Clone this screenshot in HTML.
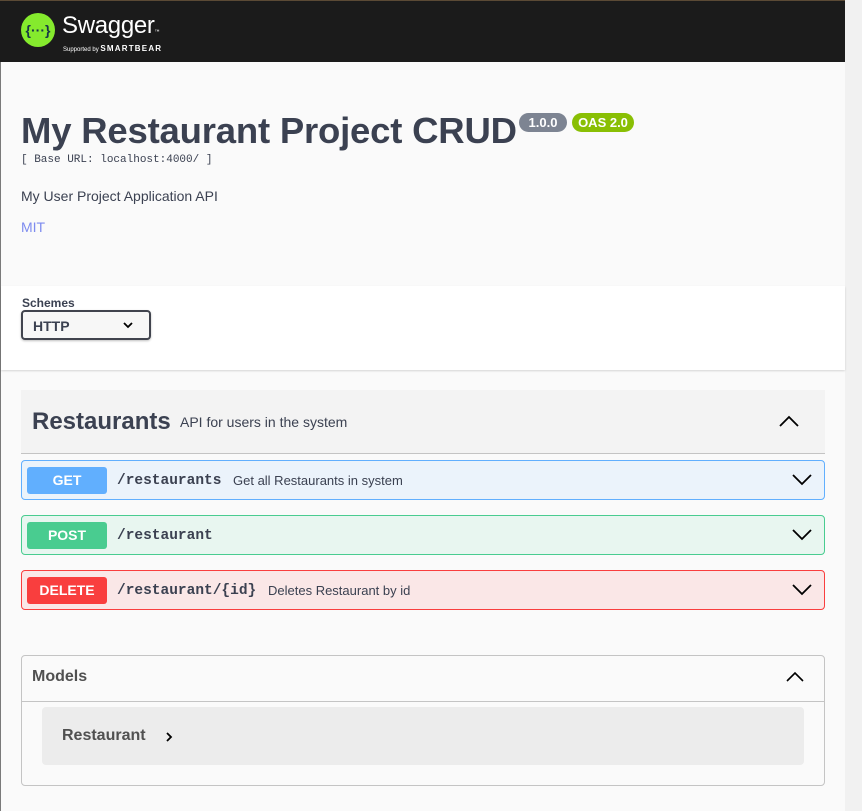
<!DOCTYPE html>
<html><head><meta charset="utf-8"><style>
*{box-sizing:border-box;margin:0;padding:0}
body{width:862px;height:811px;overflow:hidden;font-family:"Liberation Sans",sans-serif;background:#fafafa;position:relative;color:#3b4151}
.page{position:absolute;left:0;top:0;width:845px;height:811px;background:#fafafa;border-left:1px solid #7a7a7a}
.sb{position:absolute;left:845px;top:0;width:17px;height:811px;background:#f1f1f1}
.top{position:absolute;left:0;top:0;width:845px;height:62px;background:#1b1b1b;border-top:1px solid #5b4a35}
.abs{position:absolute}
.mono{font-family:"Liberation Mono",monospace}
.op{position:absolute;left:21px;width:804px;height:40px;border:1px solid;border-radius:4px}
.op .m{position:absolute;left:5px;top:6px;width:80px;height:27px;border-radius:3px;color:#fff;font-weight:bold;font-size:14px;text-align:center;line-height:27px}
.op .p{position:absolute;left:95px;top:12px;font-family:"Liberation Mono",monospace;font-weight:bold;font-size:14.5px;color:#3b4151}
.op .d{position:absolute;top:12px;font-size:13px;color:#3b4151}
.op svg{position:absolute;right:12px;top:11px}
</style></head><body>
<div class="page"></div>
<div class="sb"></div>
<div class="top">
 <svg class="abs" style="left:20px;top:11px" width="36" height="36" viewBox="0 0 36 36"><circle cx="18" cy="18" r="17" fill="#85ea2d"/><text x="18" y="23" font-family="Liberation Sans" font-size="14" font-weight="bold" fill="#173647" text-anchor="middle">{···}</text></svg>
 <div class="abs" style="left:62px;top:11px;color:#fff;font-size:24px;letter-spacing:-0.3px">Swagger<span style="font-size:5px">™</span></div>
 <div class="abs" style="left:63px;top:43px;color:#fff;font-size:6px">Supported by <b style="font-size:8px;letter-spacing:1.2px">SMARTBEAR</b></div>
</div>
<div class="abs" style="left:1px;top:286px;width:844px;height:84px;background:#fff;box-shadow:0 1px 2px rgba(0,0,0,.15)"></div>
<div class="abs" style="left:21px;top:110px;font-size:36.5px;font-weight:bold;color:#3b4151;letter-spacing:-0.2px">My Restaurant Project CRUD</div>
<div class="abs" style="left:519px;top:113px;width:48px;height:19px;border-radius:10px;background:#7d8492;color:#fff;font-size:13px;font-weight:bold;text-align:center;line-height:19px">1.0.0</div>
<div class="abs" style="left:572px;top:113px;width:62px;height:19px;border-radius:10px;background:#89bf04;color:#fff;font-size:13px;font-weight:bold;text-align:center;line-height:19px">OAS 2.0</div>
<div class="abs mono" style="left:21px;top:154px;font-size:11px;color:#3b4151">[ Base URL: localhost:4000/ ]</div>
<div class="abs" style="left:21px;top:188px;font-size:14px">My User Project Application API</div>
<div class="abs" style="left:21px;top:219px;font-size:14px;color:#7d8bef">MIT</div>
<div class="abs" style="left:22px;top:296px;font-size:12px;font-weight:bold">Schemes</div>
<div class="abs" style="left:21px;top:310px;width:130px;height:30px;border:2px solid #41444e;border-radius:4px;background:#f7f7f7;box-shadow:0 1px 2px rgba(0,0,0,.25)">
 <span class="abs" style="left:10px;top:6px;font-size:14px;font-weight:bold">HTTP</span>
 <svg class="abs" style="left:100px;top:9px" width="10" height="8" viewBox="0 0 10 8"><path d="M1 2l4 4 4-4" stroke="#000" stroke-width="1.8" fill="none"/></svg>
</div>
<div class="abs" style="left:21px;top:390px;width:804px;height:64px;background:#f3f3f3;border-bottom:1px solid #c4c4c4"></div>
<div class="abs" style="left:32px;top:408px;font-size:24px;font-weight:bold">Restaurants</div>
<div class="abs" style="left:180px;top:414px;font-size:14px">API for users in the system</div>
<svg class="abs" style="left:779px;top:414px" width="20" height="14" viewBox="0 0 20 14"><path d="M1 12l9-9 9 9" stroke="#000" stroke-width="1.8" fill="none"/></svg>

<div class="op" style="top:460px;background:#ebf3fb;border-color:#61affe"><div class="m" style="background:#61affe">GET</div><div class="p">/restaurants</div><div class="d" style="left:211px">Get all Restaurants in system</div><svg width="20" height="14" viewBox="0 0 20 14"><path d="M1 3l9 9 9-9" stroke="#000" stroke-width="1.8" fill="none"/></svg></div>
<div class="op" style="top:515px;background:#e8f6f0;border-color:#49cc90"><div class="m" style="background:#49cc90">POST</div><div class="p">/restaurant</div><svg width="20" height="14" viewBox="0 0 20 14"><path d="M1 3l9 9 9-9" stroke="#000" stroke-width="1.8" fill="none"/></svg></div>
<div class="op" style="top:570px;background:#fae7e7;border-color:#f93e3e"><div class="m" style="background:#f93e3e">DELETE</div><div class="p">/restaurant/{id}</div><div class="d" style="left:246px">Deletes Restaurant by id</div><svg width="20" height="14" viewBox="0 0 20 14"><path d="M1 3l9 9 9-9" stroke="#000" stroke-width="1.8" fill="none"/></svg></div>

<div class="abs" style="left:21px;top:655px;width:804px;height:131px;border:1px solid #c4c4c4;border-radius:4px;background:#fafafa">
 <div class="abs" style="left:0;top:45px;width:802px;height:1px;background:#c4c4c4"></div>
 <div class="abs" style="left:10px;top:12px;font-size:16px;font-weight:bold;color:#505050">Models</div>
 <svg class="abs" style="left:763px;top:14px" width="20" height="14" viewBox="0 0 20 14"><path d="M2 11l8-8 8 8" stroke="#000" stroke-width="1.6" fill="none"/></svg>
 <div class="abs" style="left:20px;top:51px;width:762px;height:58px;background:#ececec;border-radius:4px">
  <span class="abs" style="left:20px;top:20px;font-size:16px;font-weight:bold;color:#505050">Restaurant</span>
  <svg class="abs" style="left:123px;top:24px" width="8" height="12" viewBox="0 0 8 12"><path d="M2 2l4 4-4 4" stroke="#000" stroke-width="1.8" fill="none"/></svg>
 </div>
</div>
</body></html>
